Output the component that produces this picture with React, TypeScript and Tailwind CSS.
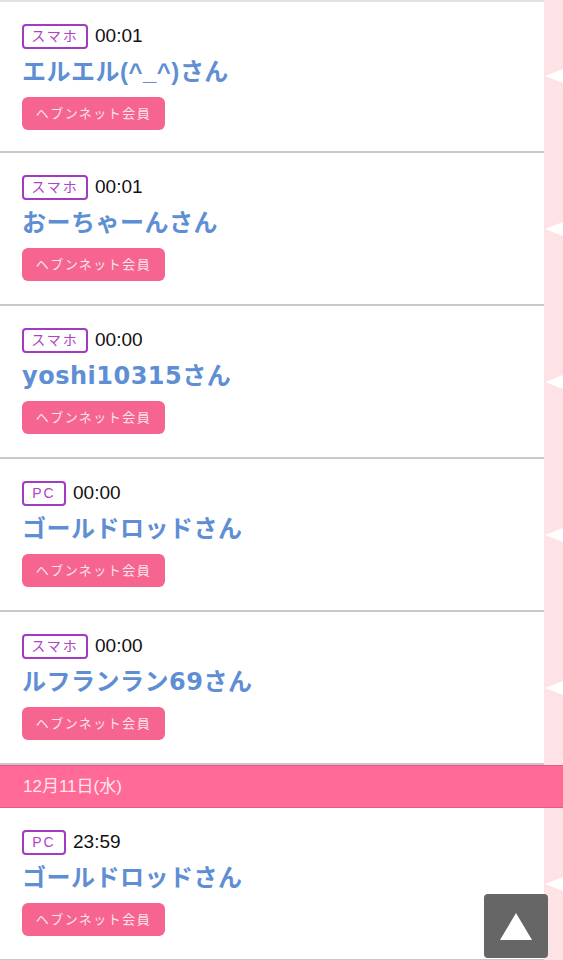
import React from "react";

type Item = { dev: string; time: string; name: React.ReactNode };

const items: Item[] = [
  {
    dev: "スマホ",
    time: "00:01",
    name: (
      <>
        エルエル<span className="font-['Liberation_Sans','Noto_Sans_CJK_JP',sans-serif]">(^_^)</span>さん
      </>
    ),
  },
  { dev: "スマホ", time: "00:01", name: "おーちゃーんさん" },
  { dev: "スマホ", time: "00:00", name: "yoshi10315さん" },
  { dev: "PC", time: "00:00", name: "ゴールドロッドさん" },
  { dev: "スマホ", time: "00:00", name: "ルフランラン69さん" },
];

const font = { fontFamily: '"Liberation Sans", "Noto Sans CJK JP", sans-serif' };

function Row({ item, top }: { item: Item; top?: boolean }) {
  return (
    <div className="flex h-[153px]">
      <div
        className={`flex-1 border-b-2 border-[#c8c8c8] bg-white pl-[22px] pt-[22px] ${
          top ? "border-t-2 border-t-[#e2e2e2]" : ""
        }`}
      >
        <div className="flex items-center h-[25px]">
          <span
            className={`flex h-[25px] items-center justify-center rounded-[4px] border-2 border-[#a23ac4] text-[14px] text-[#b044c4] tracking-[2px] ${
              item.dev === "PC" ? "w-[44px] tracking-[1px]" : "w-[66px]"
            }`}
          >
            {item.dev}
          </span>
          <span className="ml-[7px] text-[19px] text-[#111]">{item.time}</span>
        </div>
        <div className="mt-[9px] h-[28px] whitespace-nowrap text-[24px] leading-[28px] font-bold text-[#5e8ed3] tracking-[0.5px] font-['DejaVu_Sans','Noto_Sans_CJK_JP',sans-serif]">
          {item.name}
        </div>
        <div className="mt-[11px] flex h-[33px] w-[143px] items-center justify-center rounded-[6px] bg-[#f5658f] text-[13px] text-[#fde3ec] tracking-[1.5px]">
          ヘブンネット会員
        </div>
      </div>
      <div className="relative w-[19px] bg-[#fde3e6]">
        <div className="absolute right-0 top-[69px] h-0 w-0 border-y-[7px] border-r-[18px] border-y-transparent border-r-white" />
      </div>
    </div>
  );
}

export default function App() {
  return (
    <div className="relative w-[563px] h-[960px] overflow-hidden bg-white" style={font}>
      {items.map((it, i) => (
        <Row key={i} item={it} top={i === 0} />
      ))}
      <div className="flex h-[43px] items-center border-y border-[#e8588a] bg-[#ff6b96] pl-[23px] text-[17px] text-[#ffe6ee]">
        12月11日(水)
      </div>
      <Row item={{ dev: "PC", time: "23:59", name: "ゴールドロッドさん" }} />
      <div className="absolute left-[484px] top-[894px] flex h-[64px] w-[64px] items-center justify-center rounded-[4px] bg-[#666666]">
        <div className="h-0 w-0 border-x-[16px] border-b-[27px] border-x-transparent border-b-white" />
      </div>
    </div>
  );
}
